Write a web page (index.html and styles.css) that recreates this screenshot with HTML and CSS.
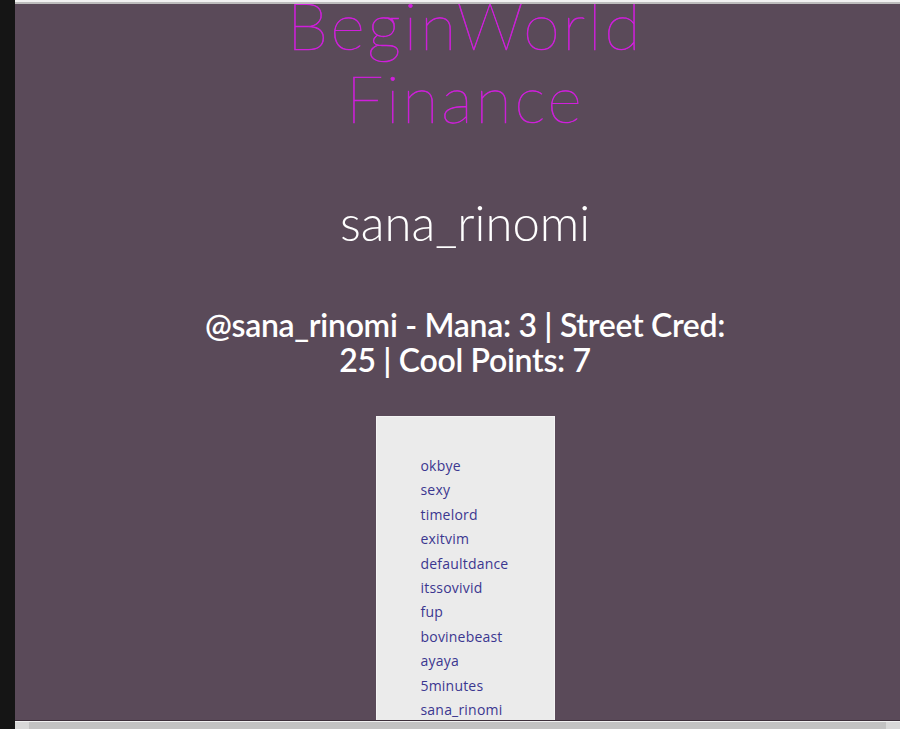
FILE: index.html
```html
<!DOCTYPE html>
<html>
<head>
<meta charset="utf-8">
<link rel="stylesheet" href="styles.css">
</head>
<body>
<div class="shell">
  <div class="side"></div>
  <div class="window">
    <div class="topline"></div>
    <main class="page">
      <h1 class="brand">BeginWorld<br>Finance</h1>
      <h2 class="user">sana_rinomi</h2>
      <h3 class="stats">@sana_rinomi - Mana: 3 | Street Cred:<br>25 | Cool Points: 7</h3>
      <div class="panel">
        <ul class="list">
          <li>okbye</li>
          <li>sexy</li>
          <li>timelord</li>
          <li>exitvim</li>
          <li>defaultdance</li>
          <li>itssovivid</li>
          <li>fup</li>
          <li>bovinebeast</li>
          <li>ayaya</li>
          <li>5minutes</li>
          <li>sana_rinomi</li>
        </ul>
      </div>
    </main>
    <div class="hscroll">
      <span class="arrow left"></span>
      <span class="track"></span>
      <span class="arrow right"></span>
    </div>
  </div>
</div>
</body>
</html>
```
FILE: styles.css
```css
html, body {
  margin: 0;
  padding: 0;
  width: 900px;
  height: 729px;
  overflow: hidden;
  background: #141414;
}
.shell {
  display: flex;
  height: 729px;
}
.side {
  width: 15px;
  flex: none;
  background: #151515;
}
.window {
  flex: 1;
  display: flex;
  flex-direction: column;
  overflow: hidden;
  min-width: 0;
}
.topline {
  height: 4px;
  flex: none;
  background: linear-gradient(#f2f2f2 0 2px, #bdbdbd 2px 4px);
}
.page {
  flex: 1;
  width: 900px;
  background: #5a4a59;
  overflow: hidden;
  text-align: center;
  font-family: "Lato", "Open Sans", sans-serif;
  border-bottom: 1px solid #3c2f3a;
}
.brand {
  margin: -16px 0 0;
  font-weight: 100;
  font-size: 67px;
  line-height: 73px;
  letter-spacing: 2.5px;
  color: #d01fdc;
  -webkit-text-stroke: 0.6px #d01fdc;
}
.user {
  margin: 60px 0 0;
  font-weight: 300;
  font-size: 49px;
  line-height: 56px;
  color: #ffffff;
}
.stats {
  margin: 57px 0 0;
  font-weight: 600;
  font-size: 32px;
  line-height: 35px;
  letter-spacing: -0.3px;
  color: #ffffff;
}
.panel {
  width: 177px;
  margin: 39px auto 0;
  background: #ebebeb;
  border: 1px solid #f4f4f4;
  text-align: left;
  padding: 37px 0 0;
}
.list {
  list-style: none;
  margin: 0;
  padding: 0 0 0 44px;
  font-family: "Open Sans", "Lato", sans-serif;
  font-size: 14px;
  line-height: 24.4px;
  letter-spacing: 0.2px;
  color: #3b3790;
}
.hscroll {
  height: 7px;
  flex: none;
  display: flex;
  background: #c2c2c2;
  border-top: 1px solid #f0f0f0;
}
.arrow {
  width: 14px;
  background: #d8d8d8;
}
.track {
  flex: 1;
}
```
